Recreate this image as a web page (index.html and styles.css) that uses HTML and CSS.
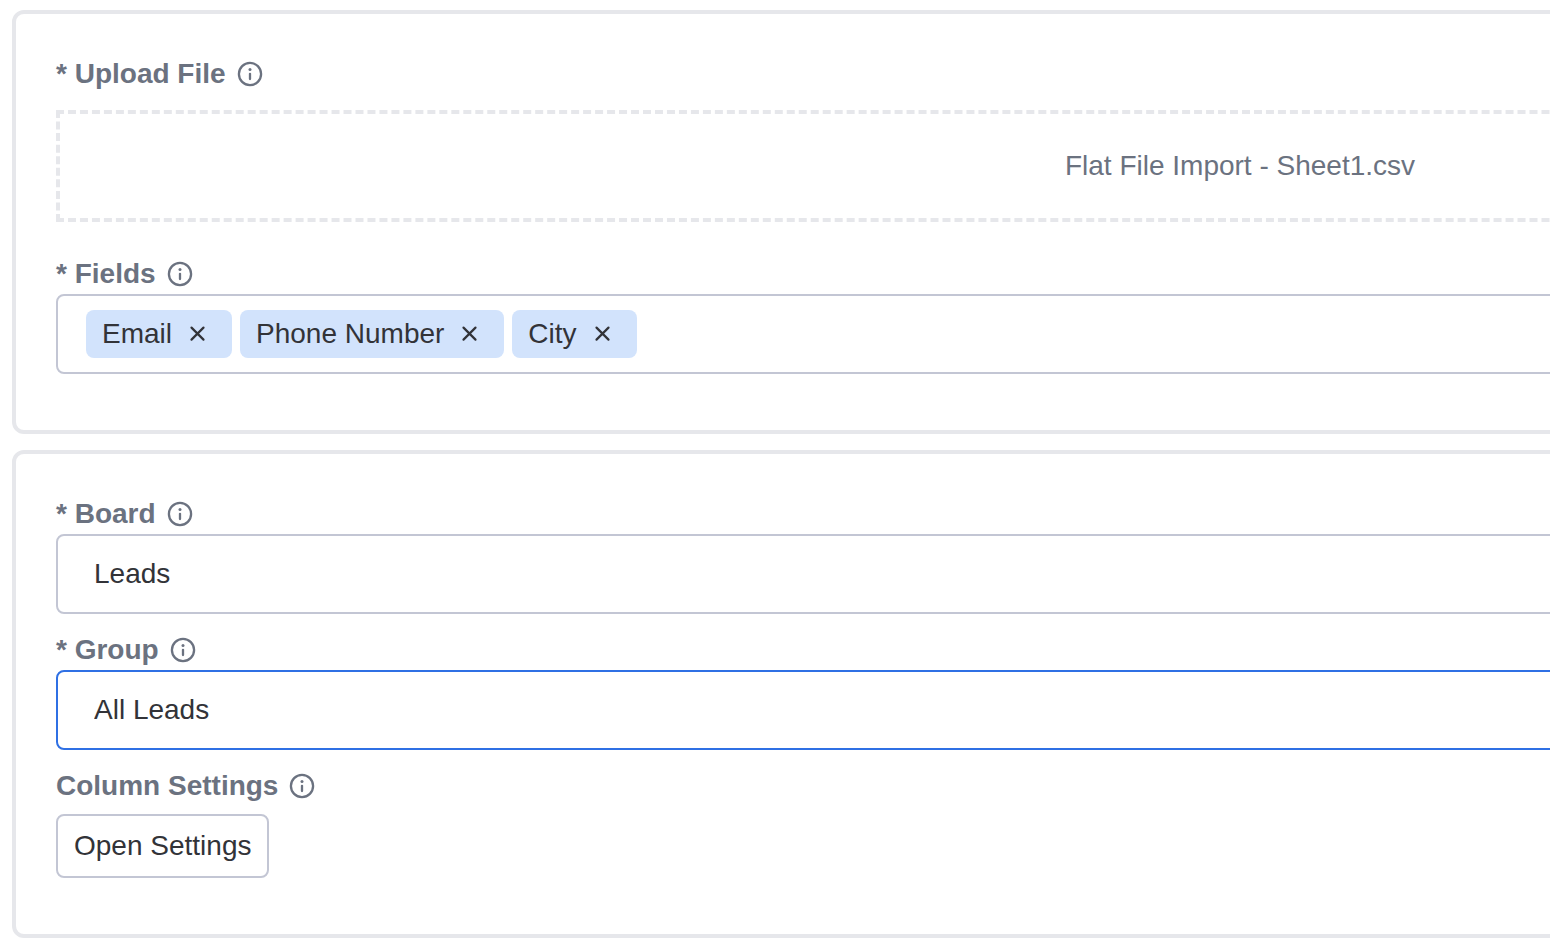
FILE: index.html
```
<!DOCTYPE html>
<html lang="en">
<head>
    <meta charset="utf-8">
    <meta name="viewport" content="width=device-width, initial-scale=1">
    <title>Import Settings</title>
    <link rel="stylesheet" href="styles.css">
</head>
<body>
    <svg class="sprite" aria-hidden="true">
        <symbol id="icon-info" viewBox="0 0 28 28">
            <circle cx="14" cy="14" r="11.1" fill="none" stroke="currentColor" stroke-width="2.3"/>
            <circle cx="14" cy="9.4" r="1.5" fill="currentColor"/>
            <path d="M14 13.8v5.2" fill="none" stroke="currentColor" stroke-width="2.3" stroke-linecap="round"/>
        </symbol>
        <symbol id="icon-close" viewBox="0 0 28 28">
            <path d="M7.5 7.6l12 12M19.5 7.6l-12 12" fill="none" stroke="currentColor" stroke-width="2.2" stroke-linecap="round"/>
        </symbol>
    </svg>

    <form class="form">
        <section class="panel">
            <div class="field field-upload">
                <div class="field-head">
                    <label for="file">* Upload File</label>
                    <svg class="icon"><use href="#icon-info"/></svg>
                </div>
                <button type="button" class="dropzone" id="file">Flat File Import - Sheet1.csv</button>
            </div>
            <div class="field">
                <div class="field-head">
                    <span class="field-label" id="fields-label">* Fields</span>
                    <svg class="icon"><use href="#icon-info"/></svg>
                </div>
                <div class="control tags" role="group" aria-labelledby="fields-label">
                    <span class="tag">Email<button type="button" class="tag-remove" aria-label="Remove Email"><svg class="icon"><use href="#icon-close"/></svg></button></span>
                    <span class="tag">Phone Number<button type="button" class="tag-remove" aria-label="Remove Phone Number"><svg class="icon"><use href="#icon-close"/></svg></button></span>
                    <span class="tag">City<button type="button" class="tag-remove" aria-label="Remove City"><svg class="icon"><use href="#icon-close"/></svg></button></span>
                </div>
            </div>
        </section>

        <section class="panel">
            <div class="field">
                <div class="field-head">
                    <label for="board">* Board</label>
                    <svg class="icon"><use href="#icon-info"/></svg>
                </div>
                <select class="control" id="board">
                    <option>Leads</option>
                </select>
            </div>
            <div class="field">
                <div class="field-head">
                    <label for="group">* Group</label>
                    <svg class="icon"><use href="#icon-info"/></svg>
                </div>
                <select class="control active" id="group">
                    <option>All Leads</option>
                </select>
            </div>
            <div class="field">
                <div class="field-head">
                    <label for="columns">Column Settings</label>
                    <svg class="icon"><use href="#icon-info"/></svg>
                </div>
                <button type="button" class="btn" id="columns">Open Settings</button>
            </div>
        </section>
    </form>
</body>
</html>
```
FILE: styles.css
```
* { box-sizing: border-box; }
body { margin: 0; background: #fff; color: #323338; font-family: "Liberation Sans", Arial, sans-serif; font-size: 28px; line-height: 40px; overflow-x: hidden; }
button, select { font: inherit; color: inherit; background: #fff; margin: 0; }
.sprite { position: absolute; width: 0; height: 0; }
.icon { display: block; width: 28px; height: 28px; }

/* the form is wider than the window and runs off its right edge */
.form { display: flex; flex-direction: column; gap: 16px; width: 160vw; padding: 10px 12px; }
.panel { border: 4px solid #e6e7eb; border-radius: 12px; padding: 40px; }

.field { margin-bottom: 16px; }
.field-upload { margin-bottom: 32px; }
.field-head { display: flex; align-items: center; gap: 10px; color: #6b7280; font-weight: bold; }

.dropzone { display: block; width: 100%; height: 112px; margin-top: 16px; border: 4px dashed #e6e7eb; color: #6b7280; text-align: center; }

.control { display: block; width: 100%; height: 80px; border: 2px solid #c3c6d4; border-radius: 8px; padding: 0 36px; }
.control.active { border-color: #2f70e4; }
select.control { appearance: none; }

.tags { display: flex; align-items: center; gap: 8px; padding: 0 28px; }
.tag { display: flex; align-items: center; height: 48px; padding: 0 20px 0 16px; border-radius: 8px; background: #d2e3fc; }
.tag-remove { margin-left: 12px; padding: 0; border: 0; background: none; }

.btn { display: block; height: 64px; margin-top: 8px; padding: 0 16px; border: 2px solid #c3c6d4; border-radius: 8px; }
```
